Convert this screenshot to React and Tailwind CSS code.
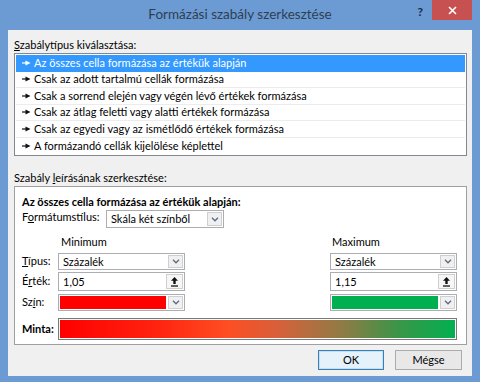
import React from 'react';

const rules = [
  'Az összes cella formázása az értékük alapján',
  'Csak az adott tartalmú cellák formázása',
  'Csak a sorrend elején vagy végén lévő értékek formázása',
  'Csak az átlag feletti vagy alatti értékek formázása',
  'Csak az egyedi vagy az ismétlődő értékek formázása',
  'A formázandó cellák kijelölése képlettel',
];

const RuleArrow = ({ color }) => (
  <svg width="9" height="6" viewBox="0 0 9 6" className="shrink-0">
    <path d="M0 3h4" stroke={color} strokeWidth="1.2" />
    <path d="M3.5 0.5L8.5 3L3.5 5.5Z" fill={color} />
  </svg>
);

const DropBtn = () => (
  <div className="w-[15px] m-[1px] border border-[#cfcfcf] bg-[#f0f0f0] flex items-center justify-center shrink-0">
    <svg width="8" height="5" viewBox="0 0 8 5"><path d="M1 0.8l3 3 3-3" fill="none" stroke="#5a6a86" strokeWidth="1.3" /></svg>
  </div>
);

const UploadBtn = () => (
  <div className="w-[17px] m-[1px] border border-[#cfcfcf] bg-[#f6f6f6] flex items-center justify-center shrink-0">
    <svg width="9" height="11" viewBox="0 0 9 11">
      <path d="M4.5 1L1 4.8h2.3V8h2.4V4.8H8Z" fill="#111" />
      <path d="M1 10h7" stroke="#111" strokeWidth="1.3" />
    </svg>
  </div>
);

function Select({ value, className = '' }) {
  return (
    <div className={`flex h-[17px] border border-[#abadb3] bg-white ${className}`}>
      <span className="flex-1 pl-[4px] leading-[15px] whitespace-nowrap">{value}</span>
      <DropBtn />
    </div>
  );
}

function ValueInput({ value }) {
  return (
    <div className="flex h-[19px] border border-[#abadb3] bg-white">
      <span className="flex-1 pl-[4px] leading-[17px]">{value}</span>
      <UploadBtn />
    </div>
  );
}

function ColorPick({ color }) {
  return (
    <div className="flex h-[17px] border border-[#abadb3] bg-white">
      <div className="flex-1 p-[1px]"><div className={`h-full ${color}`} /></div>
      <DropBtn />
    </div>
  );
}

export default function App() {
  return (
    <div className="w-[480px] h-[382px] bg-[#6b9bd2] flex flex-col text-[11px] text-black font-['Segoe_UI','Lato',sans-serif]">
      <div className="h-[30px] grid grid-cols-[1fr_auto_1fr] shrink-0">
        <div />
        <div className="text-[13.5px] text-[#2f3f52] pt-[5px] leading-[18px]">Formázási szabály szerkesztése</div>
        <div className="flex justify-end items-start pr-[8px]">
          <span className="text-[12px] font-bold text-[#1e2c40] mt-[3px] mr-[9px]">?</span>
          <div className="w-[40px] h-[20px] bg-[#c75050] flex items-center justify-center">
            <svg width="9" height="9" viewBox="0 0 9 9"><path d="M1 1l7 7M8 1l-7 7" stroke="#fff" strokeWidth="1.6" /></svg>
          </div>
        </div>
      </div>

      <div className="flex-1 mx-[8px] mb-[6px] bg-[#f0f0f0] flex flex-col pl-[6px] pr-[5px] pt-[7px]">
        <div className="leading-[16px]"><span className="underline">S</span>zabálytípus kiválasztása:</div>
        <div className="border border-[#828790] bg-white p-[1px]">
          {rules.map((r, i) => (
            <div key={r} className={`h-[16.5px] flex items-center gap-[3px] pl-[6px] ${i === 0 ? 'bg-[#3399ff] text-white' : ''} ${i > 0 && i < rules.length - 1 ? 'border-b border-[#ececec]' : ''}`}>
              <RuleArrow color={i === 0 ? '#fff' : '#111'} />
              <span className="whitespace-nowrap">{r}</span>
            </div>
          ))}
        </div>

        <div className="leading-[16px] mt-[14px]">Szabály <span className="underline">l</span>eírásának szerkesztése:</div>
        <div className="border border-[#a0a0a0] bg-white h-[159px] pl-[7px] pr-[9px] pt-[7px] flex flex-col">
          <div className="font-bold leading-[15px]">Az összes cella formázása az értékük alapján:</div>
          <div className="flex items-start mt-[1px]">
            <span className="w-[84px] leading-[14px]">F<span className="underline">o</span>rmátumstílus:</span>
            <Select value="Skála két színből" className="w-[118px] h-[18px]" />
          </div>

          <div className="grid grid-cols-[36px_127px_1fr_127px] items-center mt-[7px] gap-y-[2px]">
            <div />
            <div className="pl-[3px] leading-[14px]">Minimum</div>
            <div />
            <div className="pl-[2px] leading-[14px]">Maximum</div>

            <div className="mt-[2px]"><span className="underline">T</span>ípus:</div>
            <Select value="Százalék" className="mt-[2px]" />
            <div />
            <Select value="Százalék" className="mt-[2px]" />

            <div>É<span className="underline">r</span>ték:</div>
            <ValueInput value="1,05" />
            <div />
            <ValueInput value="1,15" />

            <div className="mt-[1px]">Sz<span className="underline">í</span>n:</div>
            <div className="mt-[1px]"><ColorPick color="bg-[#ff0000]" /></div>
            <div />
            <div className="mt-[1px]"><ColorPick color="bg-[#00b050]" /></div>
          </div>

          <div className="flex items-center mt-[7px]">
            <span className="w-[36px] font-bold">Minta:</span>
            <div className="flex-1 h-[22px] border border-[#7a7a7a] p-[1px]">
              <div className="h-full bg-[linear-gradient(to_right,#ff0000_0%,#ff2410_25%,#ff4d22_42%,#d8603a_55%,#8c7c45_72%,#3e9448_85%,#00b050_100%)]" />
            </div>
          </div>
        </div>

        <div className="flex justify-end gap-[11px] mt-[5px] pr-[5px]">
          <button className="w-[66px] h-[20px] border border-[#3c7fb1] bg-[#e5f1fb] shadow-[inset_0_0_0_1px_#bfe0f7]">OK</button>
          <button className="w-[67px] h-[20px] border border-[#acacac] bg-[#e8e8e8]">Mégse</button>
        </div>
      </div>
    </div>
  );
}
